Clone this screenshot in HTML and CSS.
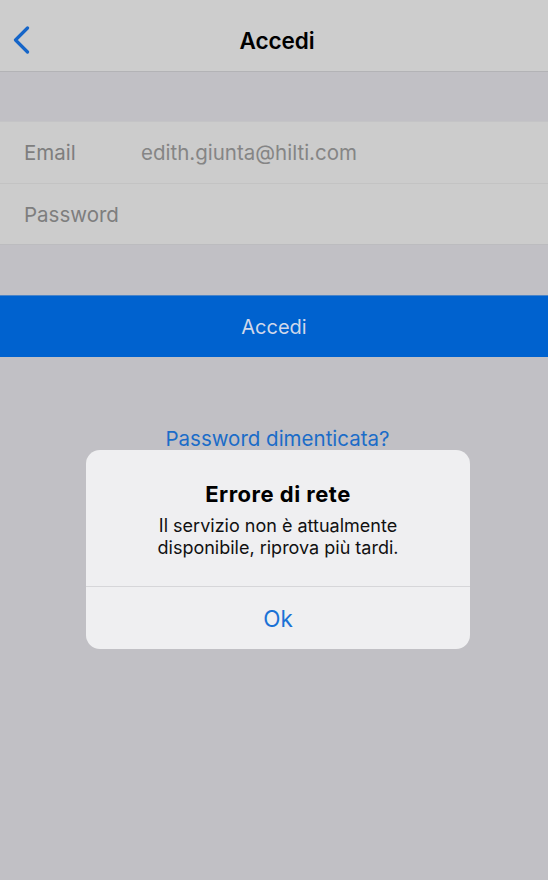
FILE: index.html
```html
<!DOCTYPE html>
<html lang="it">
<head>
<meta charset="utf-8">
<title>Accedi</title>
<link rel="stylesheet" href="styles.css">
</head>
<body>
<div class="screen">
  <header class="nav">
    <span class="back">
      <svg width="18" height="28" viewBox="0 0 18 28" aria-hidden="true"><path d="M15.5 2 L3.5 14 L15.5 26" fill="none" stroke="#1565c8" stroke-width="3.2" stroke-linecap="round" stroke-linejoin="round"/></svg>
    </span>
    <h1 class="title">Accedi</h1>
  </header>
  <div class="gap"></div>
  <section class="fields">
    <div class="row"><span class="label">Email</span><span class="value">edith.giunta@hilti.com</span></div>
    <div class="row"><span class="label">Password</span></div>
  </section>
  <div class="gap gap-lower"></div>
  <div class="submit">Accedi</div>
  <div class="forgot">Password dimenticata?</div>

  <div class="alert">
    <div class="alert-body">
      <div class="alert-title">Errore di rete</div>
      <div class="alert-msg">Il servizio non è attualmente<br>disponibile, riprova più tardi.</div>
    </div>
    <div class="alert-action">Ok</div>
  </div>
</div>
</body>
</html>
```

FILE: styles.css
```css
html, body {
  margin: 0;
  padding: 0;
  height: 100%;
}
body {
  background: #c1c0c5;
  font-family: Inter, "Noto Sans", "Liberation Sans", sans-serif;
  -webkit-font-smoothing: antialiased;
}
.screen {
  position: relative;
  min-height: 880px;
}
.nav {
  background: #cdcdcd;
  border-bottom: 1px solid #b3b3b6;
  display: flex;
  align-items: center;
  justify-content: center;
  position: relative;
  padding-top: 10px;
  box-sizing: content-box;
  height: 61px;
}
.back {
  position: absolute;
  left: 12px;
  top: 26px;
  width: 18px;
  height: 28px;
}
.title {
  margin: 0;
  padding-left: 6px;
  font-size: 22.5px;
  font-weight: 600;
  color: #000;
  letter-spacing: -0.1px;
}
.gap {
  height: 49px;
}
.gap-lower {
  height: 50px;
}
.fields {
  background: #cccccc;
  border-top: 1px solid #c4c4c6;
  border-bottom: 1px solid #bcbcbf;
}
.row {
  height: 61px;
  display: flex;
  align-items: center;
  padding-left: 24px;
  font-size: 20.5px;
  color: #7e7e7e;
}
.row + .row {
  border-top: 1px solid #c3c3c3;
  height: 60px;
}
.label {
  width: 117px;
}
.value {
  color: #858585;
}
.submit {
  height: 62px;
  background: #0062cf;
  border-top: 1px solid #4a84c8;
  color: #d0d8ea;
  font-size: 20px;
  display: flex;
  align-items: center;
  justify-content: center;
  box-sizing: border-box;
}
.forgot {
  margin-top: 70px;
  text-align: center;
  font-size: 20.5px;
  color: #1b6cc8;
  padding-left: 7px;
  line-height: 24px;
}
.alert {
  position: absolute;
  left: 86px;
  top: 450px;
  width: 384px;
  height: 199px;
  background: #efeff1;
  border-radius: 14px;
  display: flex;
  flex-direction: column;
  overflow: hidden;
}
.alert-body {
  height: 137px;
  border-bottom: 1px solid #d6d6d9;
  text-align: center;
  padding-top: 30px;
  box-sizing: border-box;
}
.alert-title {
  font-size: 22px;
  font-weight: 650;
  color: #000;
  line-height: 28px;
  letter-spacing: 0.5px;
}
.alert-msg {
  margin-top: 7px;
  font-size: 18px;
  line-height: 22px;
  color: #111;
}
.alert-action {
  flex: 1;
  display: flex;
  align-items: center;
  justify-content: center;
  font-size: 22.5px;
  color: #1b72d6;
}
```
